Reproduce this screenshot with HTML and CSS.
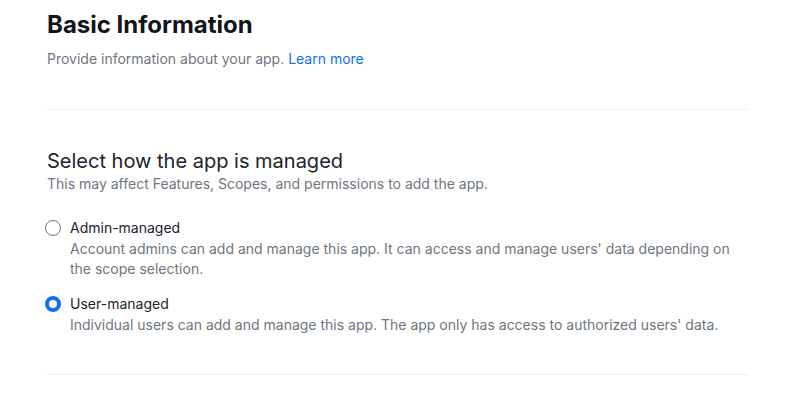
FILE: index.html
```html
<!DOCTYPE html>
<html lang="en">
<head>
<meta charset="utf-8">
<link rel="stylesheet" href="styles.css">
</head>
<body>
<div class="page">
  <h1 class="title">Basic Information</h1>
  <p class="intro">Provide information about your app. <a class="link" href="#">Learn more</a></p>
  <hr class="divider">
  <section class="section">
    <h2 class="section-title">Select how the app is managed</h2>
    <p class="section-sub">This may affect Features, Scopes, and permissions to add the app.</p>
    <div class="options">
      <label class="option">
        <span class="radio"></span>
        <span class="option-body">
          <span class="option-label">Admin-managed</span>
          <span class="option-desc">Account admins can add and manage this app. It can access and manage users' data depending on the scope selection.</span>
        </span>
      </label>
      <label class="option">
        <span class="radio checked"></span>
        <span class="option-body">
          <span class="option-label">User-managed</span>
          <span class="option-desc">Individual users can add and manage this app. The app only has access to authorized users' data.</span>
        </span>
      </label>
    </div>
  </section>
  <hr class="divider bottom">
</div>
</body>
</html>
```
FILE: styles.css
```css
* { box-sizing: border-box; }
body {
  margin: 0;
  background: #fff;
  font-family: Inter, "Noto Sans", sans-serif;
  color: #222230;
}
.page {
  width: 700px;
  margin-left: 47px;
  padding-top: 9px;
}
.title {
  margin: 0;
  font-size: 24px;
  font-weight: 700;
  line-height: 32px;
  color: #131619;
}
.intro {
  margin: 8px 0 0;
  font-size: 14px;
  line-height: 20px;
  color: #6e7680;
}
.link {
  color: #0e72ed;
  text-decoration: none;
}
.divider {
  margin: 40px 0 0;
  border: 0;
  border-top: 1px solid #ededf4;
}
.section {
  padding-top: 37px;
}
.section-title {
  margin: 0;
  font-size: 20px;
  font-weight: 400;
  line-height: 28px;
  color: #222230;
}
.section-sub {
  margin: 0;
  font-size: 14px;
  line-height: 18px;
  color: #6e7680;
}
.options {
  display: flex;
  flex-direction: column;
  gap: 15px;
  margin-top: 25px;
}
.option {
  display: flex;
  gap: 8px;
  align-items: flex-start;
}
.radio {
  flex: none;
  width: 16px;
  height: 16px;
  margin-top: 2px;
  border: 1px solid #6e7680;
  border-radius: 50%;
  margin-left: -2px;
}
.radio.checked {
  border: 4px solid #0e72ed;
}
.option-body {
  display: flex;
  flex-direction: column;
  padding-left: 1px;
}
.option-label {
  font-size: 14px;
  line-height: 20px;
  color: #222230;
}
.option-desc {
  margin-top: 1px;
  font-size: 14px;
  line-height: 20px;
  color: #6e7680;
}
.divider.bottom {
  margin-top: 39px;
}
```
